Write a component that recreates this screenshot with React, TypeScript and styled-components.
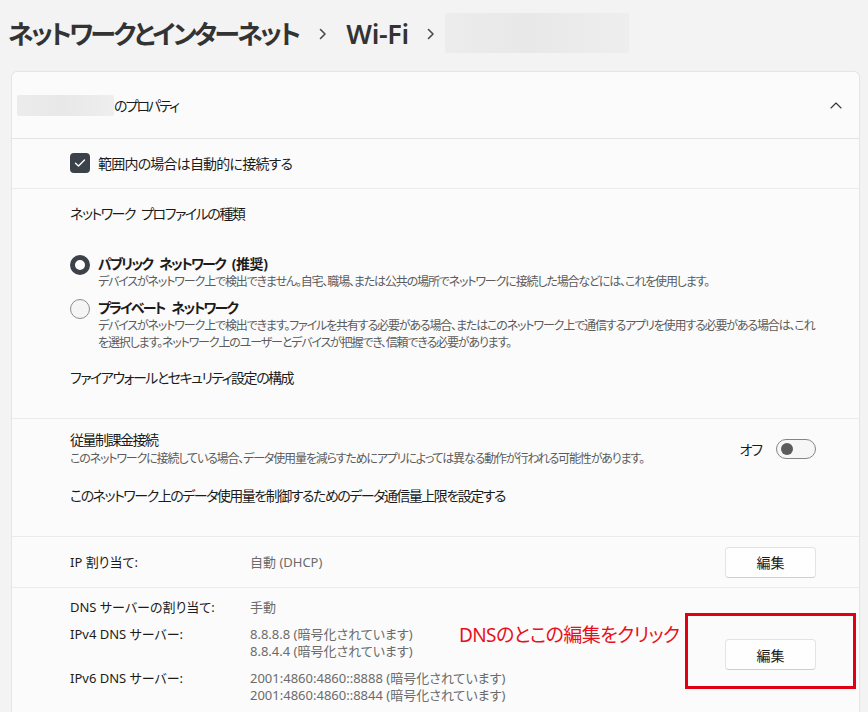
import React from 'react';
import styled, { createGlobalStyle } from 'styled-components';

const GlobalStyle = createGlobalStyle`
  html, body {
    margin: 0;
    padding: 0;
    background: #f3f3f3;
  }
  body {
    font-family: "Noto Sans", "Noto Sans CJK JP", sans-serif;
    font-feature-settings: "palt";
    color: #1b1b1b;
    overflow: hidden;
  }
`;

const Page = styled.div`
  width: 868px;
  height: 712px;
  overflow: hidden;
`;

const Breadcrumb = styled.div`
  display: flex;
  align-items: center;
  height: 66px;
  padding-left: 8px;
  margin-bottom: 5px;
`;

const Crumb = styled.span<{ $tight?: boolean }>`
  font-size: ${(p) => (p.$tight ? 26 : 27)}px;
  font-weight: 600;
  color: #333;
  letter-spacing: ${(p) => (p.$tight ? -2.8 : -0.3)}px;
  white-space: nowrap;
`;

const Sep = styled.span<{ $before: number; $after: number }>`
  display: flex;
  margin: 2px ${(p) => p.$after}px 0 ${(p) => p.$before}px;
`;

const Redacted = styled.div<{ $w: number; $h: number }>`
  width: ${(p) => p.$w}px;
  height: ${(p) => p.$h}px;
  background: linear-gradient(90deg, #ececec 0%, #e8e8e8 45%, #eeeeee 100%);
  border-radius: 2px;
  flex-shrink: 0;
`;

const Card = styled.div`
  margin-left: 11px;
  width: 849px;
  box-sizing: border-box;
  background: #fbfbfb;
  border: 1px solid #e5e5e5;
  border-bottom: none;
  border-radius: 6px 6px 0 0;
`;

const CardHeader = styled.div`
  display: flex;
  align-items: center;
  height: 66px;
  padding: 0 17px 0 5px;
  border-bottom: 1px solid #e5e5e5;
  font-size: 14px;
`;

const HeaderTitle = styled.span`
  flex: 1;
  color: #1b1b1b;
  letter-spacing: -2px;
`;

const Section = styled.div<{ $h?: number; $pt?: number; $pb?: number }>`
  position: relative;
  box-sizing: border-box;
  padding: ${(p) => p.$pt ?? 0}px 43px ${(p) => p.$pb ?? 0}px 58px;
  ${(p) => (p.$h ? `height: ${p.$h}px;` : '')}
  border-bottom: 1px solid #ebebeb;
  &:last-child {
    border-bottom: none;
  }
`;

const CenterRow = styled.div`
  display: flex;
  align-items: center;
  height: 100%;
`;

const CheckRow = styled.label`
  display: flex;
  align-items: center;
  gap: 8px;
  font-size: 14px;
  letter-spacing: -0.8px;
  margin-top: -2px;
`;

const CheckBox = styled.span`
  width: 20px;
  height: 20px;
  border-radius: 4px;
  background: #3b4249;
  display: flex;
  align-items: center;
  justify-content: center;
`;

const Label = styled.div<{ $mt?: number }>`
  font-size: 14px;
  line-height: 20px;
  letter-spacing: -1.5px;
  word-spacing: 4px;
  margin-top: ${(p) => p.$mt ?? 0}px;
`;

const RadioOption = styled.div<{ $mt: number }>`
  display: grid;
  grid-template-columns: 20px 1fr;
  column-gap: 8px;
  margin-top: ${(p) => p.$mt}px;
`;

const RadioDot = styled.span<{ $on?: boolean }>`
  width: 20px;
  height: 20px;
  box-sizing: border-box;
  border-radius: 50%;
  background: ${(p) => (p.$on ? '#ffffff' : '#f5f5f5')};
  border: ${(p) => (p.$on ? '5px solid #3b4249' : '1px solid #8c8c8c')};
  grid-row: 1 / span 3;
`;

const OptionTitle = styled.div`
  font-size: 14px;
  font-weight: 700;
  line-height: 18px;
  letter-spacing: -1.8px;
  word-spacing: 5px;
`;

const OptionHint = styled.span`
  letter-spacing: -0.4px;
`;

const Desc = styled.div`
  font-size: 12px;
  line-height: 17px;
  letter-spacing: -1.15px;
  color: #5c5c5c;
`;

const SettingRow = styled.div`
  display: flex;
  align-items: center;
`;

const SettingText = styled.div`
  flex: 1;
`;

const ToggleWrap = styled.div`
  display: flex;
  align-items: center;
  gap: 14px;
  font-size: 14px;
  letter-spacing: -1px;
`;

const Toggle = styled.span`
  width: 40px;
  height: 20px;
  box-sizing: border-box;
  border: 1px solid #858585;
  border-radius: 10px;
  background: #f6f6f6;
  display: flex;
  align-items: center;
  padding-left: 4px;
  &::after {
    content: '';
    width: 12px;
    height: 12px;
    border-radius: 50%;
    background: #5b5b5b;
  }
`;

const InfoGrid = styled.div<{ $center?: boolean }>`
  flex: 1;
  display: grid;
  grid-template-columns: 180px 1fr auto;
  align-items: ${(p) => (p.$center ? 'center' : 'start')};
  row-gap: 10px;
  font-size: 13px;
  line-height: 17px;
`;

const InfoLabel = styled.div`
  color: #1b1b1b;
`;

const InfoValue = styled.div`
  color: #6b6b6b;
`;

const EditButton = styled.button<{ $span?: string; $mt?: number }>`
  width: 91px;
  height: 31px;
  grid-column: 3;
  grid-row: ${(p) => p.$span ?? 'auto'};
  align-self: center;
  margin-top: ${(p) => p.$mt ?? 0}px;
  background: #fefefe;
  border: 1px solid #e3e3e3;
  border-bottom-color: #cfcfcf;
  border-radius: 4px;
  font-family: inherit;
  font-feature-settings: "palt";
  font-size: 14px;
  color: #1b1b1b;
  padding: 0;
`;

const Note = styled.div`
  position: absolute;
  left: 447px;
  top: 35px;
  font-size: 19px;
  line-height: 24px;
  letter-spacing: -0.6px;
  color: #e8101c;
  white-space: nowrap;
`;

const Highlight = styled.div`
  position: absolute;
  left: 673px;
  top: 25px;
  width: 171px;
  height: 76px;
  box-sizing: border-box;
  border: 3px solid #e00012;
  pointer-events: none;
`;

const Chevron = ({ dir }: { dir: 'right' | 'up' }) =>
  dir === 'right' ? (
    <svg width="8" height="12" viewBox="0 0 8 12" fill="none">
      <path d="M1.5 1.5 6 6l-4.5 4.5" stroke="#4a4a4a" strokeWidth="1.6" strokeLinecap="round" strokeLinejoin="round" />
    </svg>
  ) : (
    <svg width="12" height="7" viewBox="0 0 12 7" fill="none">
      <path d="M1 6 6 1l5 5" stroke="#333" strokeWidth="1.1" strokeLinecap="round" strokeLinejoin="round" />
    </svg>
  );

const Check = () => (
  <svg width="12" height="10" viewBox="0 0 12 10" fill="none">
    <path d="M1.5 5.2 4.5 8 10.5 2" stroke="#fff" strokeWidth="1.4" strokeLinecap="round" strokeLinejoin="round" />
  </svg>
);

const App = () => (
  <Page>
    <GlobalStyle />
    <Breadcrumb>
      <Crumb $tight>ネットワークとインターネット</Crumb>
      <Sep $before={21} $after={19}>
        <Chevron dir="right" />
      </Sep>
      <Crumb>Wi-Fi</Crumb>
      <Sep $before={18} $after={10}>
        <Chevron dir="right" />
      </Sep>
      <Redacted $w={184} $h={40} />
    </Breadcrumb>

    <Card>
      <CardHeader>
        <Redacted $w={97} $h={21} />
        <HeaderTitle>のプロパティ</HeaderTitle>
        <Chevron dir="up" />
      </CardHeader>

      <Section $h={50}>
        <CenterRow>
          <CheckRow>
            <CheckBox>
              <Check />
            </CheckBox>
            範囲内の場合は自動的に接続する
          </CheckRow>
        </CenterRow>
      </Section>

      <Section $pt={15} $pb={30}>
        <Label>ネットワーク プロファイルの種類</Label>
        <RadioOption $mt={31}>
          <RadioDot $on />
          <OptionTitle>
            パブリック ネットワーク <OptionHint>(推奨)</OptionHint>
          </OptionTitle>
          <Desc>デバイスがネットワーク上で検出できません。自宅、職場、または公共の場所でネットワークに接続した場合などには、これを使用します。</Desc>
        </RadioOption>
        <RadioOption $mt={9}>
          <RadioDot />
          <OptionTitle>プライベート ネットワーク</OptionTitle>
          <Desc>
            デバイスがネットワーク上で検出できます。ファイルを共有する必要がある場合、またはこのネットワーク上で通信するアプリを使用する必要がある場合は、これを選択します。ネットワーク上のユーザーとデバイスが把握でき、信頼できる必要があります。
          </Desc>
        </RadioOption>
        <Label $mt={17}>ファイアウォールとセキュリティ設定の構成</Label>
      </Section>

      <Section $pt={11} $pb={30}>
        <SettingRow>
          <SettingText>
            <Label>従量制課金接続</Label>
            <Desc>このネットワークに接続している場合、データ使用量を減らすためにアプリによっては異なる動作が行われる可能性があります。</Desc>
          </SettingText>
          <ToggleWrap>
            オフ
            <Toggle />
          </ToggleWrap>
        </SettingRow>
        <Label $mt={19}>このネットワーク上のデータ使用量を制御するためのデータ通信量上限を設定する</Label>
      </Section>

      <Section $h={51}>
        <CenterRow>
          <InfoGrid $center>
            <InfoLabel>IP 割り当て:</InfoLabel>
            <InfoValue>自動 (DHCP)</InfoValue>
            <EditButton>編集</EditButton>
          </InfoGrid>
        </CenterRow>
      </Section>

      <Section $pt={11} $pb={12}>
        <InfoGrid>
          <InfoLabel>DNS サーバーの割り当て:</InfoLabel>
          <InfoValue>手動</InfoValue>
          <EditButton $span="1 / 4" $mt={6}>
            編集
          </EditButton>
          <InfoLabel>IPv4 DNS サーバー:</InfoLabel>
          <InfoValue>
            8.8.8.8 (暗号化されています)
            <br />
            8.8.4.4 (暗号化されています)
          </InfoValue>
          <InfoLabel>IPv6 DNS サーバー:</InfoLabel>
          <InfoValue>
            2001:4860:4860::8888 (暗号化されています)
            <br />
            2001:4860:4860::8844 (暗号化されています)
          </InfoValue>
        </InfoGrid>
        <Note>DNSのとこの編集をクリック</Note>
        <Highlight />
      </Section>
    </Card>
  </Page>
);

export default App;
